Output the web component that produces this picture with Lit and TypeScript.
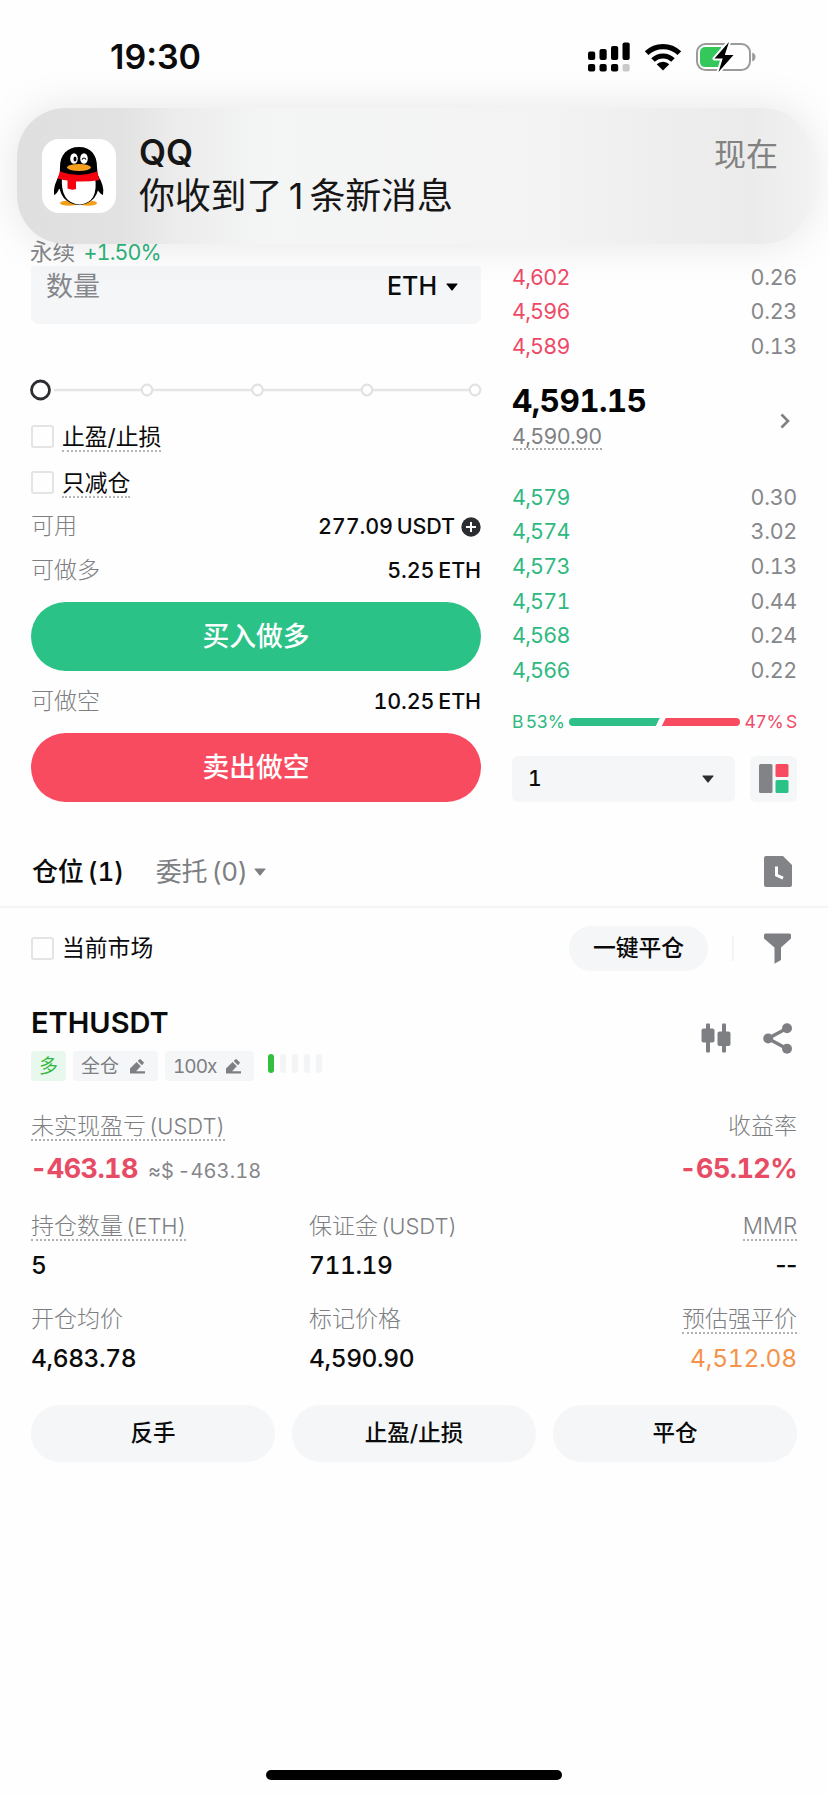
import { LitElement, html, css, svg } from 'lit';
import { customElement, property } from 'lit/decorators.js';

const asks = [
  ['4,602', '0.26'],
  ['4,596', '0.23'],
  ['4,589', '0.13'],
];

const bids = [
  ['4,579', '0.30'],
  ['4,574', '3.02'],
  ['4,573', '0.13'],
  ['4,571', '0.44'],
  ['4,568', '0.24'],
  ['4,566', '0.22'],
];

const pencil = html`
  <svg width="15" height="15" viewBox="0 0 15 15" fill="#7d7f83">
    <path d="M0 14.5V9.4L6.6 3l4.2 4.2-4.7 5.1H15v2.2z" />
    <path d="M7.7 2 9.6.3q.5-.5 1 0l3.1 3q.5.5 0 1L11.9 6.2z" />
  </svg>
`;

@customElement('status-bar')
export class StatusBar extends LitElement {

  static styles = css`
    :host {
      display: flex;
      height: 108px;
      box-sizing: border-box;
      padding: 5px 72px 0 110px;
      align-items: center;
      justify-content: space-between;
    }

    .time {
      font-size: 34px;
      font-weight: 600;
      font-feature-settings: normal;
    }

    .icons {
      display: flex;
      align-items: center;
      gap: 14px;
    }
  `;

  render() {
    return html`
      <span class="time">19:30</span>
      <div class="icons">
        <svg width="42" height="30" viewBox="0 0 42 30">
          <rect x="0" y="9.5" width="7.2" height="8.5" rx="2" />
          <rect x="11.5" y="7" width="7.2" height="11" rx="2" />
          <rect x="23" y="4" width="7.2" height="14" rx="2" />
          <rect x="34.5" y="0.5" width="7.2" height="17.5" rx="2" />
          <rect x="0" y="22" width="7.2" height="7.5" rx="2" />
          <rect x="11.5" y="22" width="7.2" height="7.5" rx="2" />
          <rect x="23" y="22" width="7.2" height="7.5" rx="2" />
          <rect x="34.5" y="22" width="7.2" height="7.5" rx="2" fill="#c9c9c9" />
        </svg>
        <svg width="38" height="28" viewBox="0 0 38 28">
          <path d="M2.6 10.2a23.5 23.5 0 0 1 32.8 0" fill="none" stroke="#000" stroke-width="5.2" />
          <path d="M9 17a14.3 14.3 0 0 1 20 0" fill="none" stroke="#000" stroke-width="5" />
          <path d="M19 27.5 12.7 21.2a9 9 0 0 1 12.6 0z" />
        </svg>
        <svg width="60" height="32" viewBox="0 0 60 32">
          <rect x="1" y="3" width="53" height="26" rx="8.5" fill="none" stroke="#9b9b9b" stroke-width="2" />
          <path d="M56.2 11.5q3.3 1.3 3.3 4.5t-3.3 4.5z" fill="#9b9b9b" />
          <path d="M9.5 6H25v20H9.500Q4 26 4 20.500v-9Q4 6 9.500 6z" fill="#34c759" />
          <path d="M33 1 18.500 17.500h8.200L22.500 31 37.500 14h-8.700z" stroke="#fff" stroke-width="4" stroke-linejoin="round" />
          <path d="M33 1 18.500 17.500h8.200L22.500 31 37.500 14h-8.700z" />
        </svg>
      </div>
    `;
  }
}

@customElement('push-notice')
export class PushNotice extends LitElement {

  static styles = css`
    :host {
      display: flex;
      box-sizing: border-box;
      padding: 0 34px 0 25px;
      align-items: center;
      border-radius: 48px;
      background: linear-gradient(90deg, #dfdfdf 0%, #e2e2e3 13%, #ececed 20%, #f4f5f5 32%, #f3f3f4 66%, #eeeeef 82%, #ebebeb 92%, #f3f2f2 100%);
      box-shadow: 0 0 44px rgba(0, 0, 0, 0.1);
      font-feature-settings: normal;
    }

    .logo {
      flex: none;
      width: 74px;
      height: 74px;
      border-radius: 17px;
      background: #fff;
    }

    .body {
      flex: 1;
      margin-left: 23px;
      color: #161616;
    }

    .title {
      font-size: 35px;
      font-weight: 600;
      line-height: 40px;
      margin-top: -1px;
    }

    .message {
      font-size: 36px;
      line-height: 48px;
      letter-spacing: -0.2px;
      white-space: pre;
    }

    .when {
      align-self: flex-start;
      margin-top: 25px;
      font-size: 32px;
      line-height: 44px;
      color: #828282;
    }
  `;

  render() {
    return html`
      <svg class="logo" viewBox="0 0 74 74">
        <ellipse cx="27" cy="64.2" rx="9" ry="2.6" fill="#f2a01c" />
        <ellipse cx="46" cy="64.2" rx="9" ry="2.6" fill="#f2a01c" />
        <path d="M18 35Q11 46 12 56q3-1 5-6h38q3 5 6 6 2-9-6-21z" />
        <path d="M37 8C25 8 18 16 18 28q0 6-1 12-1 24 20 26 21-2 20-26-2-6-2-12C55 16 49 8 37 8z" />
        <path d="M20 38q-2 26 17.500 27.500Q57 64 53 38z" fill="#fff" />
        <path d="M18 32.500q19 7 37 0l2.500 8.500Q47 43 34 42.500V50q-4 1.500-8.500-.5V41.500Q20 41 15.500 39.500z" fill="#f5000f" />
        <ellipse cx="37" cy="28.5" rx="12" ry="3.5" fill="#f5a01c" />
        <ellipse cx="32" cy="19.5" rx="3.8" ry="5.3" fill="#fff" />
        <ellipse cx="42" cy="19.5" rx="3.8" ry="5.3" fill="#fff" />
        <ellipse cx="33" cy="20" rx="1.5" ry="2.5" />
        <path d="M40 20.500q2-3 4 0" fill="none" stroke="#000" stroke-width="1.2" />
      </svg>
      <div class="body">
        <div class="title">QQ</div>
        <div class="message">你收到了 1 条新消息</div>
      </div>
      <span class="when">现在</span>
    `;
  }
}

@customElement('order-form')
export class OrderForm extends LitElement {

  static styles = css`
    :host {
      display: flex;
      flex-direction: column;
    }

    .ticker {
      height: 28px;
      line-height: 28px;
      margin-left: -1px;
      font-size: 22.5px;
      color: #85878a;
    }

    .ticker b {
      margin-left: 6px;
      font-weight: 400;
      font-size: 21.5px;
      letter-spacing: -0.9px;
      color: #2fb57d;
    }

    .field {
      display: flex;
      height: 58px;
      box-sizing: border-box;
      padding: 0 23px 17px 15px;
      align-items: center;
      background: #f4f6f8;
      border-radius: 3px 3px 8px 8px;
      font-size: 27px;
      color: #85878a;
    }

    .field b {
      margin: 0 9px 0 auto;
      font-weight: 500;
      font-size: 25px;
      color: #0b0b0c;
    }

    .slider {
      margin: 46px 0 3px -1px;
      height: 40px;
    }

    .slider svg {
      display: block;
    }

    .check {
      display: flex;
      height: 46px;
      align-items: center;
      gap: 8px;
      font-size: 22.8px;
    }

    .box {
      box-sizing: border-box;
      width: 23px;
      height: 23px;
      border: 2px solid #e4e4e5;
      border-radius: 3px;
    }

    .hint {
      line-height: 26px;
      margin-bottom: -3px;
      border-bottom: 2px dotted #b5b6b8;
    }

    .line {
      display: flex;
      height: 43.5px;
      align-items: center;
      justify-content: space-between;
      font-size: 23px;
      font-weight: 300;
      color: #7d7f83;
    }

    .line b {
      display: flex;
      align-items: center;
      gap: 6px;
      font-weight: 500;
      font-size: 21.5px;
      letter-spacing: -0.1px;
      word-spacing: -1.8px;
      color: #0b0b0c;
    }

    .line.short {
      height: 61px;
    }

    button {
      height: 69px;
      border: 0;
      border-radius: 35px;
      font: inherit;
      font-size: 26.8px;
      font-weight: 500;
      color: #fff;
    }

    .buy {
      margin-top: 10px;
      background: #2bc287;
    }

    .sell {
      margin-top: 1px;
      background: #f84b60;
    }
  `;

  render() {
    return html`
      <div class="ticker">永续 <b>+1.50%</b></div>
      <div class="field">
        数量 <b>ETH</b>
        <svg width="12" height="8" viewBox="0 0 12 8"><path d="M1 .5h10q1 0 .4.8L6.600 7.300q-.6.7-1.200 0L.6 1.300Q0 .5 1 .5z" /></svg>
      </div>
      <div class="slider">
        <svg width="454" height="40" viewBox="0 0 454 40" fill="#fff">
          <path d="M24 20H446" stroke="#e6e6e6" stroke-width="2.5" />
          ${[117, 227.5, 337, 445].map(x => svg`<circle cx=${x} cy="20" r="5.3" stroke="#e2e2e2" stroke-width="2.2" />`)}
          <circle cx="10.5" cy="20" r="9" stroke="#2c2d31" stroke-width="2.8" />
        </svg>
      </div>
      <div class="check"><span class="box"></span><span class="hint">止盈/止损</span></div>
      <div class="check"><span class="box"></span><span class="hint">只减仓</span></div>
      <div class="line">
        可用
        <b>277.09 USDT
          <svg width="20" height="20" viewBox="0 0 20 20">
            <circle cx="10" cy="10" r="9.7" fill="#2c2d31" />
            <path d="M10 5v10M5 10h10" stroke="#fff" stroke-width="2" />
          </svg>
        </b>
      </div>
      <div class="line">可做多 <b>5.25 ETH</b></div>
      <button class="buy">买入做多</button>
      <div class="line short">可做空 <b>10.25 ETH</b></div>
      <button class="sell">卖出做空</button>
    `;
  }
}

@customElement('order-book')
export class OrderBook extends LitElement {

  @property({ type: Number }) buyShare = 53;

  static styles = css`
    :host {
      display: flex;
      flex-direction: column;
      margin-left: -1px;
      padding-top: 22px;
    }

    .row {
      display: flex;
      height: 34.67px;
      align-items: center;
      justify-content: space-between;
      font-size: 21.5px;
      letter-spacing: -0.3px;
      color: #85878a;
    }

    .ask {
      letter-spacing: -0.8px;
      color: #ee4a67;
    }

    .bid {
      letter-spacing: -0.8px;
      color: #2fb980;
    }

    .mid {
      display: flex;
      height: 116px;
      box-sizing: border-box;
      padding: 17px 7px 0 0;
      align-items: flex-start;
      justify-content: space-between;
    }

    .chevron {
      margin-top: 32px;
    }

    .last {
      font-size: 31.5px;
      font-weight: 700;
      line-height: 40px;
      letter-spacing: -0.6px;
      color: #050505;
    }

    .mark {
      display: inline-block;
      margin-top: 3px;
      font-size: 21.5px;
      line-height: 24px;
      letter-spacing: -0.7px;
      color: #7f8184;
      border-bottom: 2px dotted #a9aaac;
      vertical-align: top;
    }

    .ratio {
      display: flex;
      height: 30px;
      margin-top: 19px;
      align-items: center;
      font-size: 17.5px;
      letter-spacing: -0.3px;
      word-spacing: -1.8px;
      color: #2fb980;
    }

    .ratio span:last-child {
      color: #ee4a67;
    }

    .bar {
      display: flex;
      flex: 1;
      height: 8px;
      margin: 0 4px;
    }

    .bar i {
      background: #2fc08a;
      border-radius: 4px 0 0 4px;
      clip-path: polygon(0 0, 100% 0, calc(100% - 4px) 100%, 0 100%);
    }

    .bar u {
      flex: 1;
      background: #f84b60;
      border-radius: 0 4px 4px 0;
      clip-path: polygon(6px 0, 100% 0, 100% 100%, 2px 100%);
    }

    .tools {
      display: flex;
      margin-top: 19px;
      gap: 15px;
    }

    .step {
      display: flex;
      flex: 1;
      height: 46px;
      box-sizing: border-box;
      padding: 0 21px 0 16px;
      align-items: center;
      justify-content: space-between;
      background: #f4f6f8;
      border-radius: 6px;
      font-size: 21px;
      font-weight: 500;
    }

    .layout {
      display: grid;
      place-items: center;
      width: 47px;
      height: 46px;
      background: #f4f6f8;
      border-radius: 6px;
    }
  `;

  private row([price, amount]: string[], side: string) {
    return html`<div class="row"><span class=${side}>${price}</span><span>${amount}</span></div>`;
  }

  render() {
    return html`
      ${asks.map(r => this.row(r, 'ask'))}
      <div class="mid">
        <div>
          <div class="last">4,591.15</div>
          <span class="mark">4,590.90</span>
        </div>
        <svg class="chevron" width="10" height="16" viewBox="0 0 10 16"><path d="m1.500 1.500 6.500 6.500-6.500 6.500" fill="none" stroke="#7d7f83" stroke-width="2.6" /></svg>
      </div>
      ${bids.map(r => this.row(r, 'bid'))}
      <div class="ratio">
        <span>B ${this.buyShare}%</span>
        <div class="bar"><i style="width: ${this.buyShare}%"></i><u></u></div>
        <span>${100 - this.buyShare}% S</span>
      </div>
      <div class="tools">
        <div class="step">
          1
          <svg width="12" height="8" viewBox="0 0 12 8"><path fill="#2c2d31" d="M1 .5h10q1 0 .4.8L6.600 7.300q-.6.7-1.200 0L.6 1.300Q0 .5 1 .5z" /></svg>
        </div>
        <div class="layout">
          <svg width="30" height="29" viewBox="0 0 30 29">
            <rect width="13.5" height="29" rx="1.5" fill="#818387" />
            <rect x="16.5" width="13" height="13" rx="1.5" fill="#f84b60" />
            <rect x="16.5" y="16" width="13" height="13" rx="1.5" fill="#2bc287" />
          </svg>
        </div>
      </div>
    `;
  }
}

@customElement('position-card')
export class PositionCard extends LitElement {

  static styles = css`
    :host {
      display: block;
      padding: 14px 31px 0;
    }

    .head {
      display: flex;
      justify-content: space-between;
    }

    .symbol {
      font-size: 29px;
      font-weight: 600;
      line-height: 42px;
    }

    .tags {
      display: flex;
      margin-top: 7px;
      gap: 7px;
      font-size: 19px;
      color: #7d7f83;
    }

    .tag {
      display: flex;
      height: 30px;
      box-sizing: border-box;
      padding: 0 13px 0 8px;
      align-items: center;
      gap: 11px;
      background: #f4f6f8;
      border-radius: 4px;
    }

    .tag.leverage {
      gap: 10px;
      letter-spacing: -1px;
    }

    .tag.long {
      padding: 0 8px;
      background: #e9f8ed;
      color: #33b83f;
    }

    .risk {
      display: flex;
      margin: 3px 0 0 7px;
      gap: 6px;
    }

    .risk i {
      width: 6px;
      height: 19px;
      border-radius: 3px;
      background: #f3f4f5;
    }

    .risk i:first-child {
      background: #33c03f;
    }

    .actions {
      display: flex;
      padding: 21px 4px 0 0;
      gap: 32px;
    }

    .stats {
      display: grid;
      grid-template-columns: 278px 1fr auto;
      margin-top: 32px;
    }

    .stats > :nth-child(n + 4) {
      margin-top: 27px;
    }

    .stats > :nth-child(n + 7) {
      margin-top: 26px;
    }

    .stats > :nth-child(3n) {
      text-align: right;
    }

    .wide {
      white-space: nowrap;
    }

    .label {
      display: inline-block;
      font-size: 23px;
      font-weight: 300;
      line-height: 26px;
      margin-bottom: -2px;
      border-bottom: 2px solid transparent;
      color: #7d7f83;
      vertical-align: top;
    }

    .label small {
      font-size: 22px;
    }

    .label.mmr {
      font-size: 22.5px;
      letter-spacing: -0.2px;
    }

    .label.hint {
      border-bottom: 2px dotted #b0b1b3;
    }

    .value {
      margin-top: 11px;
      line-height: 30px;
      font-size: 24.5px;
      font-weight: 500;
      letter-spacing: -0.4px;
    }

    .value.big {
      margin-top: 15px;
      font-size: 27px;
      font-weight: 700;
      letter-spacing: -0.6px;
      color: #e84b64;
    }

    .value.loss {
      margin-left: -1px;
    }

    .approx {
      margin-left: 7px;
      font-size: 20px;
      font-weight: 400;
      letter-spacing: 0.1px;
      word-spacing: -2px;
      color: #85878a;
    }

    .none {
      font-feature-settings: normal;
    }

    .value.warn {
      color: #f5924b;
      font-weight: 400;
      letter-spacing: -0.2px;
    }

    .buttons {
      display: grid;
      grid-template-columns: repeat(3, 1fr);
      gap: 17px;
      margin-top: 32px;
    }

    button {
      height: 57px;
      border: 0;
      border-radius: 29px;
      background: #f4f6f8;
      font: inherit;
      font-size: 22.5px;
      font-weight: 500;
      color: #0b0b0c;
    }
  `;

  render() {
    return html`
      <div class="head">
        <div>
          <div class="symbol">ETHUSDT</div>
          <div class="tags">
            <span class="tag long">多</span>
            <span class="tag">全仓 ${pencil}</span>
            <span class="tag leverage">100x ${pencil}</span>
            <div class="risk"><i></i><i></i><i></i><i></i><i></i></div>
          </div>
        </div>
        <div class="actions">
          <svg width="30" height="30" viewBox="0 0 30 30" fill="#7d7f83">
            <rect x="5" y="0.5" width="4" height="29" rx="1" />
            <rect x="0.5" y="5.5" width="13" height="14" rx="2" />
            <rect x="21" y="0.5" width="4" height="29" rx="1" />
            <rect x="16.5" y="8.5" width="13" height="14.5" rx="2" />
          </svg>
          <svg width="30" height="31" viewBox="0 0 30 31" fill="#7d7f83">
            <path d="M24 5.200 5 15.500l19 10.200" fill="none" stroke="#7d7f83" stroke-width="3.4" />
            <circle cx="24" cy="5.2" r="5" />
            <circle cx="5.2" cy="15.5" r="5" />
            <circle cx="24" cy="25.7" r="5" />
          </svg>
        </div>
      </div>
      <div class="stats">
        <div class="wide">
          <span class="label hint">未实现盈亏 <small>(USDT)</small></span>
          <div class="value big loss">-463.18 <span class="approx">≈$ -463.18</span></div>
        </div>
        <div></div>
        <div>
          <span class="label">收益率</span>
          <div class="value big">-65.12%</div>
        </div>
        <div>
          <span class="label hint">持仓数量 <small>(ETH)</small></span>
          <div class="value">5</div>
        </div>
        <div>
          <span class="label">保证金 <small>(USDT)</small></span>
          <div class="value">711.19</div>
        </div>
        <div>
          <span class="label hint mmr">MMR</span>
          <div class="value none">--</div>
        </div>
        <div>
          <span class="label">开仓均价</span>
          <div class="value">4,683.78</div>
        </div>
        <div>
          <span class="label">标记价格</span>
          <div class="value">4,590.90</div>
        </div>
        <div>
          <span class="label hint">预估强平价</span>
          <div class="value warn">4,512.08</div>
        </div>
      </div>
      <div class="buttons">
        <button>反手</button>
        <button>止盈/止损</button>
        <button>平仓</button>
      </div>
    `;
  }
}

@customElement('app-root')
export class AppRoot extends LitElement {

  static styles = css`
    :host {
      display: flex;
      flex-direction: column;
      position: relative;
      width: 828px;
      height: 1795px;
      overflow: hidden;
      background: #fefefe;
      color: #0b0b0c;
      font-family: Inter, "Noto Sans CJK SC", sans-serif;
      font-feature-settings: "tnum";
      line-height: 1;
      word-spacing: -3.5px;
    }

    push-notice {
      position: absolute;
      left: 17px;
      top: 108px;
      width: 795px;
      height: 136px;
    }

    .trade {
      display: grid;
      grid-template-columns: 450px 284px;
      gap: 32px;
      margin-top: 130px;
      padding-left: 31px;
      height: 564px;
    }

    .tabs {
      display: flex;
      height: 69px;
      margin-top: 35px;
      padding: 0 36px 0 32px;
      align-items: center;
      border-bottom: 2px solid #f4f5f6;
      font-size: 26px;
      letter-spacing: -0.3px;
      word-spacing: -2.5px;
      color: #7d7f83;
    }

    .tabs b {
      margin-right: 32px;
      font-weight: 500;
      color: #0b0b0c;
    }

    .tabs span {
      margin-right: 6px;
    }

    .doc {
      margin-left: auto;
    }

    .filter {
      display: flex;
      height: 80px;
      padding: 0 37px 0 31px;
      align-items: center;
      font-size: 22.8px;
    }

    .box {
      box-sizing: border-box;
      width: 23px;
      height: 23px;
      margin-right: 8px;
      border: 2px solid #e4e4e5;
      border-radius: 3px;
    }

    .close-all {
      width: 139px;
      height: 45px;
      margin-left: auto;
      border: 0;
      border-radius: 23px;
      background: #f4f6f8;
      font: inherit;
      font-weight: 500;
      color: #0b0b0c;
    }

    .split {
      width: 2px;
      height: 25px;
      margin: 0 30px 0 24px;
      background: #f3f4f5;
    }

    .home {
      width: 296px;
      height: 10px;
      margin: auto auto 15px;
      border-radius: 5px;
      background: #000;
    }
  `;

  render() {
    return html`
      <status-bar></status-bar>
      <push-notice></push-notice>
      <div class="trade">
        <order-form></order-form>
        <order-book></order-book>
      </div>
      <div class="tabs">
        <b>仓位 (1)</b>
        <span>委托 (0)</span>
        <svg width="12" height="8" viewBox="0 0 12 8"><path fill="#7d7f83" d="M1 .5h10q1 0 .4.8L6.600 7.300q-.6.7-1.200 0L.6 1.300Q0 .5 1 .5z" /></svg>
        <svg class="doc" width="28" height="31" viewBox="0 0 28 31">
          <path d="M2 0h17l9 9v20q0 2-2 2H2q-2 0-2-2V2q0-2 2-2z" fill="#818387" />
          <path d="M12.500 10.500v8.500l6.500 3.200" fill="none" stroke="#fff" stroke-width="3" />
        </svg>
      </div>
      <div class="filter">
        <span class="box"></span>
        当前市场
        <button class="close-all">一键平仓</button>
        <span class="split"></span>
        <svg width="27" height="31" viewBox="0 0 27 31">
          <path d="M1.500.5h24q1.500 0 1.500 1.500v3.500L17 14.500V27l-6.500 3.800V14.500L0 5.500V2Q0 .5 1.500.5z" fill="#7d7f83" />
        </svg>
      </div>
      <position-card></position-card>
      <div class="home"></div>
    `;
  }
}
